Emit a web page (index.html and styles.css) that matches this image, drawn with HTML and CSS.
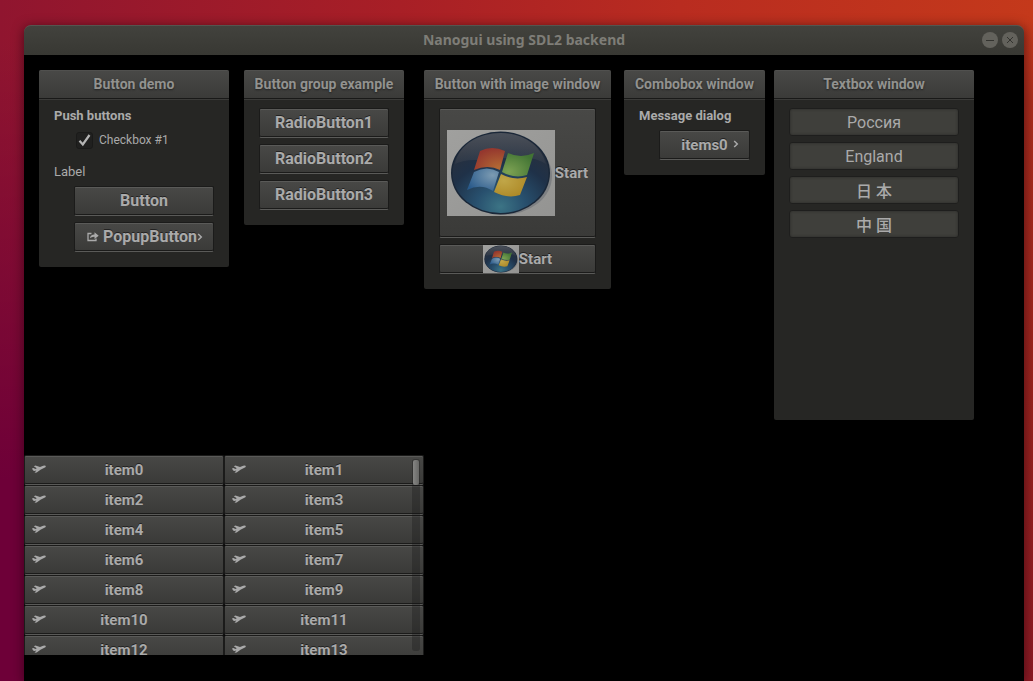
FILE: index.html
```html
<!DOCTYPE html>
<html lang="en">
<head>
<meta charset="utf-8">
<title>Nanogui using SDL2 backend</title>
<link rel="stylesheet" href="styles.css">
</head>
<body>
<svg class="defs" aria-hidden="true">
  <defs>
    <radialGradient id="orb" cx="50%" cy="92%" r="85%">
      <stop offset="0" stop-color="#3c7485"/><stop offset=".3" stop-color="#28506e"/><stop offset=".65" stop-color="#1f3148"/><stop offset="1" stop-color="#2a303b"/>
    </radialGradient>
    <linearGradient id="gloss" x1="0" y1="0" x2="0" y2="1"><stop offset="0" stop-color="#4a505a"/><stop offset="1" stop-color="#4a505a" stop-opacity=".2"/></linearGradient>
    <linearGradient id="photo" x1="0" y1="0" x2="1" y2="1"><stop offset="0" stop-color="#a0a09e"/><stop offset="1" stop-color="#949492"/></linearGradient>
    <radialGradient id="red" cx="80%" cy="90%" r="90%"><stop offset="0" stop-color="#b26a34"/><stop offset="1" stop-color="#95372e"/></radialGradient>
    <radialGradient id="green" cx="20%" cy="80%" r="90%"><stop offset="0" stop-color="#7da253"/><stop offset="1" stop-color="#427434"/></radialGradient>
    <radialGradient id="blue" cx="80%" cy="30%" r="90%"><stop offset="0" stop-color="#7c9bb2"/><stop offset="1" stop-color="#28598a"/></radialGradient>
    <radialGradient id="gold" cx="30%" cy="30%" r="90%"><stop offset="0" stop-color="#c0a648"/><stop offset="1" stop-color="#ab8522"/></radialGradient>
    <symbol id="start-orb" viewBox="0 0 108 86" preserveAspectRatio="none">
      <rect width="108" height="86" fill="url(#photo)"/>
      <ellipse cx="56" cy="46" rx="49" ry="39" fill="#74767a" opacity=".7"/>
      <ellipse cx="53.500" cy="43" rx="49.500" ry="41.500" fill="#1a2738"/>
      <ellipse cx="53.500" cy="43" rx="48" ry="40" fill="url(#orb)"/>
      <path d="M8 34C12 14 32 3 54 3s40 12 45 31C80 23 62 28 49 29 32 31 20 28 8 34Z" fill="url(#gloss)"/>
      <path d="M33 21Q45 15 58 21L53 40Q41 34 27 40Z" fill="url(#red)"/>
      <path d="M61 23Q74 29 87 23L80 45Q68 49 55 42Z" fill="url(#green)"/>
      <path d="M27 42Q40 35 52 42L46 61Q34 53 20 60Z" fill="url(#blue)"/>
      <path d="M54 44Q67 51 80 47L73 65Q61 69 47 62Z" fill="url(#gold)"/>
    </symbol>
    <symbol id="plane" viewBox="0 0 14 8">
      <path d="M0 3.400 1.500 3.100 3.300 4 4.800 3.300 1.800 1.300 3.400 .6 8 1.900 11.200 .8Q13.200 .1 13.900 .9 13.900 2.100 11.900 3L8.500 4.700 4.700 7.500 2.500 7.800 4.400 5.500 2.400 6.100 1.100 5.500Z" fill="currentColor"/>
    </symbol>
    <symbol id="chevron" viewBox="0 0 6 8"><path d="M1.200 1 4.300 4 1.200 7" fill="none" stroke="currentColor" stroke-width="1.500"/></symbol>
  </defs>
</svg>

<main class="app">
  <header class="titlebar">
    <h1 class="app-title">Nanogui using SDL2 backend</h1>
    <div class="controls">
      <button class="control" type="button" aria-label="Minimize"><svg viewBox="0 0 16 16"><path d="M4 8.500h8"/></svg></button>
      <button class="control" type="button" aria-label="Close"><svg viewBox="0 0 16 16"><path d="M5 5l6 6M11 5l-6 6"/></svg></button>
    </div>
  </header>

  <div class="canvas">
    <section class="panel panel-demo">
      <h2 class="panel-title">Button demo</h2>
      <div class="panel-body">
        <h3 class="caption">Push buttons</h3>
        <label class="check"><input class="check-box" type="checkbox" checked><span>Checkbox #1</span></label>
        <p class="caption caption-light">Label</p>
        <div class="stack indented">
          <button class="btn" type="button">Button</button>
          <button class="btn btn-popup" type="button">
            <svg class="share" viewBox="0 0 12 10"><path d="M4.500 1.500H1v7h8V6.500" fill="none" stroke="currentColor" stroke-width="1.300"/><path d="M3 6.200Q3.300 2.500 7.500 2.500V.3l4.200 3.400-4.200 3.200V4.700Q4.600 4.500 3 6.200Z" fill="currentColor"/></svg>
            <span>PopupButton</span>
            <svg class="chevron"><use href="#chevron"/></svg>
          </button>
        </div>
      </div>
    </section>

    <section class="panel panel-group">
      <h2 class="panel-title">Button group example</h2>
      <div class="panel-body stack">
        <button class="btn" type="button">RadioButton1</button>
        <button class="btn" type="button">RadioButton2</button>
        <button class="btn" type="button">RadioButton3</button>
      </div>
    </section>

    <section class="panel panel-image">
      <h2 class="panel-title">Button with image window</h2>
      <div class="panel-body stack">
        <button class="btn btn-small btn-large" type="button"><svg class="orb-large"><use href="#start-orb"/></svg>Start</button>
        <button class="btn btn-small" type="button"><svg class="orb-small"><use href="#start-orb"/></svg>Start</button>
      </div>
    </section>

    <section class="panel panel-combo">
      <h2 class="panel-title">Combobox window</h2>
      <div class="panel-body">
        <label class="caption" for="items">Message dialog</label>
        <div class="combo">
          <select class="btn btn-small combo-select" id="items"><option>items0</option></select>
          <svg class="chevron combo-chevron"><use href="#chevron"/></svg>
        </div>
      </div>
    </section>

    <section class="panel panel-text">
      <h2 class="panel-title">Textbox window</h2>
      <div class="panel-body stack">
        <input class="textbox" type="text" aria-label="Russia" value="Россия">
        <input class="textbox" type="text" aria-label="England" value="England">
        <input class="textbox textbox-cjk" type="text" lang="ja" aria-label="Japan" value="日 本">
        <input class="textbox textbox-cjk" type="text" lang="zh" aria-label="China" value="中 国">
      </div>
    </section>

    <section class="list" aria-label="Items">
      <div class="list-grid">
        <button class="btn btn-small item" type="button"><svg class="plane"><use href="#plane"/></svg>item0</button>
        <button class="btn btn-small item" type="button"><svg class="plane"><use href="#plane"/></svg>item1</button>
        <button class="btn btn-small item" type="button"><svg class="plane"><use href="#plane"/></svg>item2</button>
        <button class="btn btn-small item" type="button"><svg class="plane"><use href="#plane"/></svg>item3</button>
        <button class="btn btn-small item" type="button"><svg class="plane"><use href="#plane"/></svg>item4</button>
        <button class="btn btn-small item" type="button"><svg class="plane"><use href="#plane"/></svg>item5</button>
        <button class="btn btn-small item" type="button"><svg class="plane"><use href="#plane"/></svg>item6</button>
        <button class="btn btn-small item" type="button"><svg class="plane"><use href="#plane"/></svg>item7</button>
        <button class="btn btn-small item" type="button"><svg class="plane"><use href="#plane"/></svg>item8</button>
        <button class="btn btn-small item" type="button"><svg class="plane"><use href="#plane"/></svg>item9</button>
        <button class="btn btn-small item" type="button"><svg class="plane"><use href="#plane"/></svg>item10</button>
        <button class="btn btn-small item" type="button"><svg class="plane"><use href="#plane"/></svg>item11</button>
        <button class="btn btn-small item" type="button"><svg class="plane"><use href="#plane"/></svg>item12</button>
        <button class="btn btn-small item" type="button"><svg class="plane"><use href="#plane"/></svg>item13</button>
      </div>
      <div class="scrollbar"><div class="thumb"></div></div>
    </section>
  </div>
</main>
</body>
</html>
```
FILE: styles.css
```css
* { box-sizing: border-box; }

body {
  margin: 0;
  min-height: 100vh;
  display: flex;
  padding: 25px 9px 0 24px;
  overflow: hidden;
  background:
    linear-gradient(to bottom, transparent 40px, #6e0038 480px) left / 24px 100% no-repeat,
    linear-gradient(to bottom, transparent 20px, #ab2d1d 100px, #96211f 450px, #8c1a24 100%) right / 9px 100% no-repeat,
    linear-gradient(to right, #90152f 0, #a81f26 400px, #b92c20 680px, #c4391b 100%);
  font-family: Roboto, "Noto Sans CJK SC", sans-serif;
  color: #aaaaaa;
}

h1, h2, h3, p { margin: 0; }
button, input, select { font: inherit; color: inherit; }
.defs { position: absolute; width: 0; height: 0; }

.app {
  flex: 1;
  display: flex;
  flex-direction: column;
  border-radius: 7px 7px 0 0;
  box-shadow: 0 2px 12px rgba(30, 0, 10, 0.65);
}

.titlebar {
  display: grid;
  grid-template-columns: 1fr auto 1fr;
  align-items: center;
  height: 30px;
  padding: 0 6px 1px;
  border-top: 1px solid #55554f;
  border-radius: 7px 7px 0 0;
  background: linear-gradient(#42423d, #383833);
}
.app-title {
  grid-column: 2;
  font: bold 14px/20px "Noto Sans", sans-serif;
  color: #7e7d77;
}
.controls { display: flex; justify-content: flex-end; gap: 4px; }
.control {
  width: 16px;
  height: 16px;
  padding: 0;
  border: 0;
  border-radius: 50%;
  background: #63625c;
}
.control svg { display: block; width: 16px; height: 16px; fill: none; stroke: #33332f; }

.canvas { position: relative; flex: 1; background: #000; }

.panel {
  position: absolute;
  top: 15px;
  border-radius: 2px;
  background: #262624;
}
.panel-demo { left: 15px; width: 190px; }
.panel-group { left: 220px; width: 160px; }
.panel-image { left: 400px; width: 187px; }
.panel-combo { left: 600px; width: 141px; }
.panel-text { left: 750px; width: 200px; min-height: 350px; }

.panel-title {
  height: 30px;
  border-top: 1px solid #50504e;
  border-bottom: 1px solid #3b3b39;
  border-radius: 2px 2px 0 0;
  background: linear-gradient(#484846, #3a3a38);
  box-shadow: inset 0 -1px #191918;
  font-size: 14px;
  line-height: 27px;
  font-weight: bold;
  text-align: center;
  white-space: nowrap;
  color: #92928f;
  text-shadow: 0 1px 2px #222222;
}
.panel-body { padding: 8px 15px 15px; }
.stack { display: flex; flex-direction: column; gap: 6px; }
.indented { padding-left: 20px; }

.caption {
  display: block;
  font-size: 13px;
  line-height: 16px;
  font-weight: bold;
  white-space: nowrap;
}
.caption-light { margin: 15px 0 6px; font-weight: normal; }

.check { display: flex; align-items: center; gap: 6px; margin: 8px 0 0 22px; font-size: 12px; line-height: 17px; }
.check-box {
  appearance: none;
  width: 17px;
  height: 17px;
  margin: 0;
  border: 1px solid #1a1a19;
  border-radius: 3px;
  background: #20201f;
}
.check-box:checked {
  background: #20201f url("data:image/svg+xml,%3Csvg xmlns='http://www.w3.org/2000/svg' viewBox='0 0 15 15'%3E%3Cpath d='M2.500 7.800 5.800 11.500 12.500 2' fill='none' stroke='%23b4b4b4' stroke-width='2.200'/%3E%3C/svg%3E");
}

.btn {
  display: flex;
  align-items: center;
  justify-content: center;
  width: 100%;
  height: 30px;
  padding: 0;
  border: 1px solid #1b1b1a;
  border-bottom-color: #5a5a58;
  border-radius: 2px;
  background: linear-gradient(#484846, #3a3a38);
  box-shadow: inset 0 1px #5a5a58, inset 0 -1px #1b1b1a;
  font-size: 16px;
  font-weight: bold;
  line-height: 20px;
  white-space: nowrap;
  text-shadow: 0 -1px #222222;
}
.btn-small { font-size: 15px; }
.btn-popup { justify-content: flex-start; padding-left: 12px; }
.share { width: 12px; height: 10px; margin-right: 4px; }
.chevron { width: 6px; height: 8px; }
.btn-large { height: 130px; }
.orb-large { width: 108px; height: 86px; }
.orb-small { width: 36px; height: 28px; }

.combo { position: relative; margin: 6px 0 0 20px; }
.combo-select { appearance: none; text-align: center; text-align-last: center; }
.combo-chevron { position: absolute; right: 11px; top: 10px; pointer-events: none; }

.textbox {
  width: 100%;
  height: 28px;
  padding: 1px 4px 0;
  border: 1px solid #1e1e1d;
  border-radius: 3px;
  background: #3f3f3b;
  box-shadow: inset 0 0 3px #292927;
  font-size: 16px;
  text-align: center;
}
.textbox-cjk { padding-top: 0; font-weight: 500; }

.list { position: absolute; left: 0; top: 400px; width: 400px; height: 200px; overflow: hidden; }
.list-grid { display: grid; grid-template-columns: 1fr 1fr; }
.item { position: relative; }
.plane { position: absolute; left: 7px; top: 9px; width: 14px; height: 8px; }
.scrollbar {
  position: absolute;
  top: 4px;
  right: 4px;
  bottom: 4px;
  width: 8px;
  padding: 1px;
  border-radius: 3px;
  background: rgba(20, 20, 20, 0.3);
}
.thumb { height: 25px; border-radius: 2px; background: linear-gradient(to right, #858583, #686866); }
```
